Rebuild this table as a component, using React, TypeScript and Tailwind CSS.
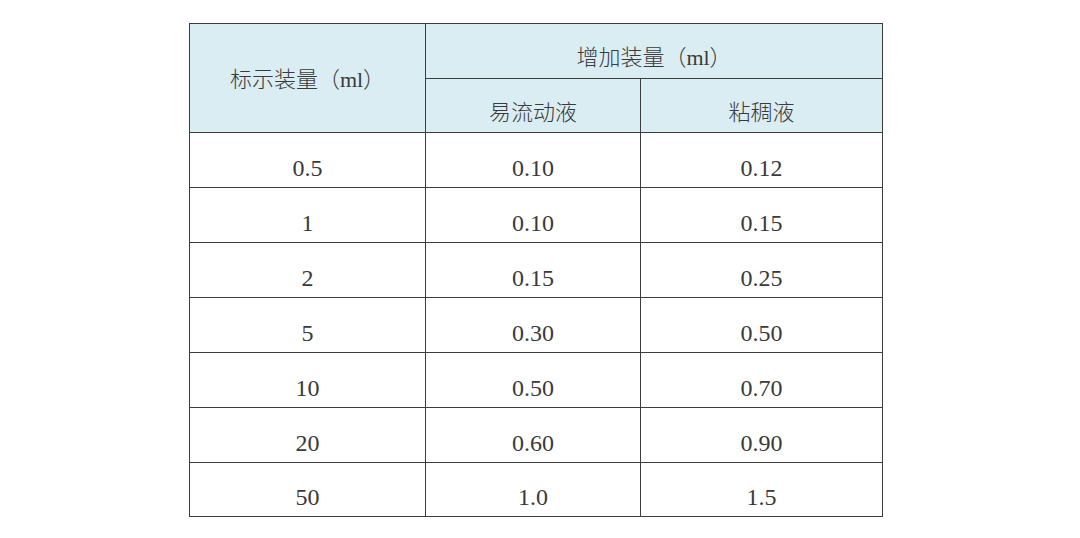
const rows = [
  ['0.5', '0.10', '0.12'],
  ['1', '0.10', '0.15'],
  ['2', '0.15', '0.25'],
  ['5', '0.30', '0.50'],
  ['10', '0.50', '0.70'],
  ['20', '0.60', '0.90'],
  ['50', '1.0', '1.5'],
]

const font = { fontFamily: '"Liberation Serif", "Noto Sans CJK SC", serif' }

export default function App() {
  return (
    <div className="min-h-[538px] w-[1080px] bg-white pl-[189px] pt-[23px]" style={font}>
      <table className="w-[693px] table-fixed border-collapse border border-[#3d3d3d] text-center text-[#3a3a3a]">
        <colgroup>
          <col className="w-[236px]" />
          <col className="w-[215px]" />
          <col className="w-[242px]" />
        </colgroup>
        <thead className="bg-[#daedf3] text-[22px]">
          <tr className="h-[55px]">
            <th rowSpan={2} className="border border-[#3d3d3d] pt-[2px] font-light">
              标示装量（ml）
            </th>
            <th colSpan={2} className="border border-[#3d3d3d] pt-[13px] font-light">
              增加装量（ml）
            </th>
          </tr>
          <tr className="h-[54px]">
            <th className="border border-[#3d3d3d] pt-[13px] font-light">易流动液</th>
            <th className="border border-[#3d3d3d] pt-[13px] font-light">粘稠液</th>
          </tr>
        </thead>
        <tbody className="text-[24px]">
          {rows.map((r, i) => (
            <tr key={i} className={i === rows.length - 1 ? 'h-[54px]' : 'h-[55px]'}>
              {r.map((c, j) => (
                <td key={j} className="border border-[#3d3d3d] pt-[15px] leading-7">
                  {c}
                </td>
              ))}
            </tr>
          ))}
        </tbody>
      </table>
    </div>
  )
}
